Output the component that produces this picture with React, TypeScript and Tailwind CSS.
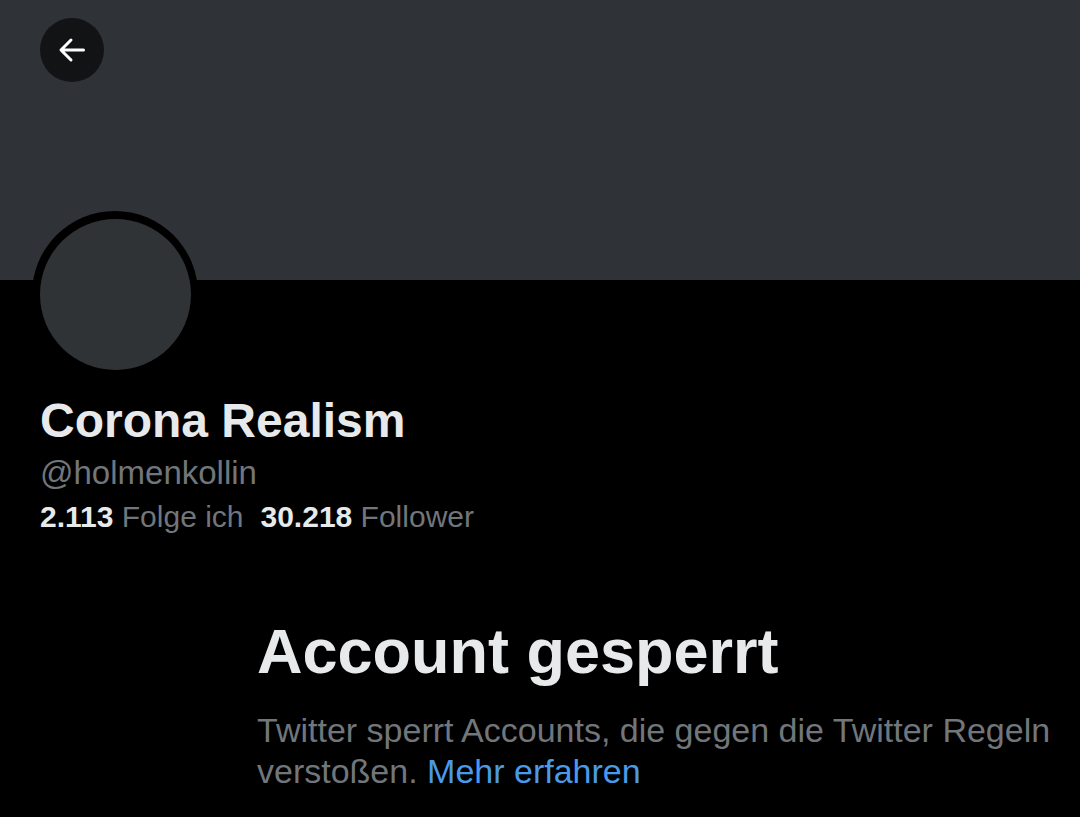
import React from "react";

export default function App() {
  return (
    <div className="w-[1080px] h-[817px] bg-black overflow-hidden" style={{ fontFamily: '"Liberation Sans", Arial, sans-serif' }}>
      <div className="h-[280px] bg-[#2f3236] pt-[18px] pl-[40px]">
        <div className="w-[64px] h-[64px] rounded-full bg-[#121315] flex items-center justify-center">
          <svg width="28" height="26" viewBox="0 0 28 26" fill="none" stroke="white" strokeWidth="3" strokeLinecap="round" strokeLinejoin="round">
            <path d="M25.5 13H3.5M13 3L3 13l10 10" />
          </svg>
        </div>
      </div>
      <div className="pl-[32px] -mt-[69px]">
        <div className="w-[166px] h-[166px] rounded-full bg-black flex items-center justify-center">
          <div className="w-[151px] h-[151px] rounded-full bg-[#2f3336]" />
        </div>
      </div>
      <div className="pl-[40px] mt-[18px]">
        <div className="text-[48px] font-bold text-[#e7e9ea] leading-[52px]">Corona Realism</div>
        <div className="text-[33px] text-[#71767b] leading-[40px] mt-[6px]">@holmenkollin</div>
        <div className="text-[30px] leading-[36px] mt-[6px] flex gap-[17px]">
          <span><span className="font-bold text-[#e7e9ea]">2.113</span> <span className="text-[#71767b]">Folge ich</span></span>
          <span><span className="font-bold text-[#e7e9ea]">30.218</span> <span className="text-[#71767b]">Follower</span></span>
        </div>
      </div>
      <div className="pl-[257px] mt-[80px] pr-[10px]">
        <div className="text-[63px] font-bold text-[#e7e9ea] leading-[72px]">Account gesperrt</div>
        <div className="text-[34px] text-[#71767b] leading-[41px] mt-[23px]">
          Twitter sperrt Accounts, die gegen die Twitter Regeln verstoßen. <span className="text-[#4a9ae9]">Mehr erfahren</span>
        </div>
      </div>
    </div>
  );
}
